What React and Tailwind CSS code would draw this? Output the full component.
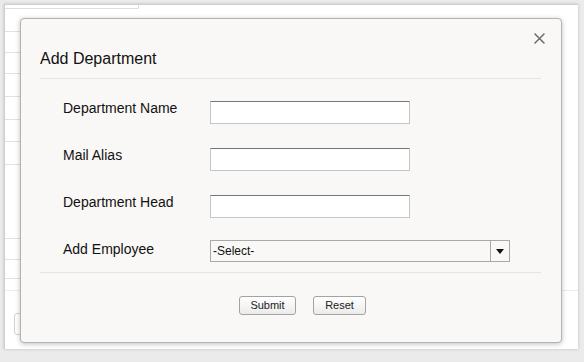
import React from "react";

const bgRows = [23, 21, 21, 23, 23, 22, 23, 74, 21, 19];

const fields = ["Department Name", "Mail Alias", "Department Head"];

function CloseIcon() {
  return (
    <svg width="11" height="11" viewBox="0 0 11 11" className="block">
      <path d="M1 1 L10 10 M10 1 L1 10" stroke="#6b6b6b" strokeWidth="1.5" strokeLinecap="round" />
    </svg>
  );
}

function PageBehind() {
  return (
    <div className="ml-[4px] mt-[4px] h-[345px] w-[574px] border-l border-t border-[#cfcfcf] bg-white shadow-[0_0_3px_rgba(0,0,0,0.2)] flex flex-col">
      <div className="h-[4px] w-[134px] border-b border-r border-[#dedede]" />
      {bgRows.map((h, i) => (
        <div key={i} style={{ height: h }} className="w-[16px] shrink-0 border-b border-[#e2e2e2]" />
      ))}
      <div className="h-[12px] w-full shrink-0 border-b border-[#ececec]" />
      <div className="ml-[9px] mt-[22px] h-[22px] w-[40px] rounded-[3px] border border-[#d2d2d2]" />
    </div>
  );
}

export default function App() {
  return (
    <div className="relative h-[362px] w-[584px] overflow-hidden bg-[#ebebeb] font-['Liberation_Sans',Arial,sans-serif] text-[#111]">
      <PageBehind />

      {/* Modal */}
      <div className="absolute left-[20px] top-[18px] h-[325px] w-[542px] rounded-[4px] border border-[#b3b3b3] bg-[#f9f8f6] pl-[19px] pr-[20px] pt-[30px] shadow-[0_1px_5px_rgba(0,0,0,0.25)]">
        <button className="absolute right-[16px] top-[14px]">
          <CloseIcon />
        </button>

        <h2 className="h-[20px] text-[16px] leading-[20px]">Add Department</h2>
        <div className="mt-[9px] border-t border-[#e6e4e0]" />

        <div className="mt-[21px] pl-[23px]">
          {fields.map((f) => (
            <div key={f} className="flex h-[47px] items-start">
              <label className="w-[147px] text-[14px] leading-[16px]">{f}</label>
              <input
                type="text"
                className="mt-[1px] h-[23px] w-[200px] border border-[#c6c6c6] border-t-[#767676] bg-white outline-none"
              />
            </div>
          ))}
          <div className="flex items-start">
            <label className="w-[147px] text-[14px] leading-[16px]">Add Employee</label>
            <div className="-mt-[1px] flex h-[22px] w-[300px] border border-[#a9a9a9] bg-[#f9f8f6]">
              <span className="flex-1 pl-[2px] text-[12px] leading-[20px]">-Select-</span>
              <span className="flex w-[19px] items-center justify-center border-l border-[#a9a9a9]">
                <svg width="8" height="5" viewBox="0 0 8 5" className="block">
                  <path d="M0 0 H8 L4 5 Z" fill="#111" />
                </svg>
              </span>
            </div>
          </div>
        </div>

        <div className="mt-[10px] border-t border-[#e6e4e0]" />

        <div className="mt-[23px] flex gap-[17px] pl-[199px]">
          <button className="h-[19px] w-[57px] rounded-[3px] border border-[#a3a3a3] bg-gradient-to-b from-white to-[#ebebeb] text-[11px] leading-[17px] text-[#222]">
            Submit
          </button>
          <button className="h-[19px] w-[53px] rounded-[3px] border border-[#a3a3a3] bg-gradient-to-b from-white to-[#ebebeb] text-[11px] leading-[17px] text-[#222]">
            Reset
          </button>
        </div>
      </div>
    </div>
  );
}
